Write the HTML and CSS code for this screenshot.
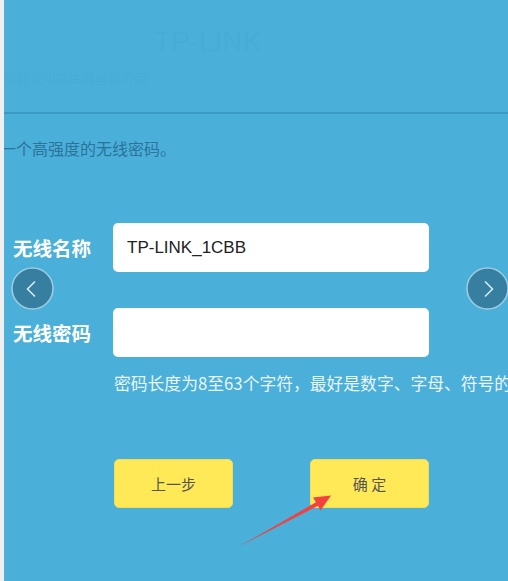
FILE: index.html
```html
<!DOCTYPE html>
<html lang="zh-CN">
<head>
    <meta charset="UTF-8">
    <meta name="viewport" content="width=device-width, initial-scale=1.0">
    <title>无线设置</title>
    <link rel="stylesheet" href="styles.css">
</head>
<body>
    <div class="screen">
        <header class="top">
            <div class="logo">TP-LINK</div>
            <p class="sub">欢迎使用路由器管理页面</p>
        </header>
        <p class="intro">一个高强度的无线密码。</p>
        <div class="form">
            <label class="name">无线名称</label>
            <div class="field">TP-LINK_1CBB</div>
            <label class="name">无线密码</label>
            <div class="field"></div>
        </div>
        <p class="hint">密码长度为8至63个字符，最好是数字、字母、符号的</p>
        <div class="actions">
            <a class="btn" href="#">上一步</a>
            <a class="btn" href="#">确&nbsp;定</a>
        </div>

        <a class="nav prev" href="#">
            <svg width="43" height="43" viewBox="0 0 43 43">
                <circle cx="21.5" cy="21.5" r="20.5" fill="#367fa1" stroke="#9ccbe0" stroke-width="1.6"/>
                <path d="M24 14.5 L16.5 22 L24 29.5" fill="none" stroke="#d4e9f3" stroke-width="1.6"/>
            </svg>
        </a>
        <a class="nav next" href="#">
            <svg width="43" height="43" viewBox="0 0 43 43">
                <circle cx="21.5" cy="21.5" r="20.5" fill="#367fa1" stroke="#9ccbe0" stroke-width="1.6"/>
                <path d="M19 14.5 L26.5 22 L19 29.5" fill="none" stroke="#d4e9f3" stroke-width="1.6"/>
            </svg>
        </a>

        <svg class="arrow" width="504" height="581" viewBox="0 0 504 581">
            <polygon points="235,546.5 312,502.3 309,497.5 327,495.5 316.5,510.5 314,505.8" fill="#f2413f"/>
        </svg>
    </div>
</body>
</html>
```

FILE: styles.css
```css
*{
    margin: 0;
    padding: 0;
    box-sizing: border-box;
}
body{
    background-color: #f0f0f0;
    font-family: "Noto Sans CJK SC", "Noto Sans", sans-serif;
}
.screen{
    position: relative;
    margin-left: 4px;
    height: 581px;
    background-color: #4aafd9;
    overflow: hidden;
}
.top{
    height: 114px;
    border-bottom: 2px solid #3a9ac3;
    padding-top: 26px;
}
.logo{
    margin-left: 150px;
    font-family: "Liberation Sans", sans-serif;
    font-size: 28px;
    color: rgba(40, 110, 150, 0.05);
}
.sub{
    margin-top: 10px;
    font-size: 13px;
    color: rgba(40, 110, 150, 0.05);
}
.intro{
    margin: 22px 0 0 -4px;
    font-size: 16px;
    line-height: 24px;
    color: #2a739b;
}
.form{
    display: grid;
    grid-template-columns: 109px 316px;
    row-gap: 36px;
    align-items: center;
    margin-top: 63px;
}
.name{
    padding-left: 9px;
    font-size: 19.5px;
    font-weight: bold;
    color: #fff;
}
.field{
    height: 49px;
    background-color: #fff;
    border-radius: 5px;
    padding-left: 14px;
    font-family: "Liberation Sans", sans-serif;
    font-size: 17px;
    line-height: 49px;
    color: #222;
}
.hint{
    margin: 14px 0 0 110px;
    font-size: 16.8px;
    line-height: 24px;
    color: #e9f5fb;
    white-space: nowrap;
}
.actions{
    display: flex;
    gap: 77px;
    margin-top: 64px;
    padding-left: 110px;
}
.btn{
    width: 119px;
    height: 49px;
    background-color: #ffe957;
    border: 1px solid #f4dc55;
    border-radius: 5px;
    font-size: 15px;
    line-height: 47px;
    text-align: center;
    text-decoration: none;
    color: #555;
}
.nav{
    position: absolute;
    top: 267px;
    display: block;
    width: 43px;
    height: 43px;
}
.nav svg{
    display: block;
}
.prev{
    left: 6.5px;
}
.next{
    left: 462px;
}
.arrow{
    position: absolute;
    left: 0;
    top: 0;
    pointer-events: none;
}
```
